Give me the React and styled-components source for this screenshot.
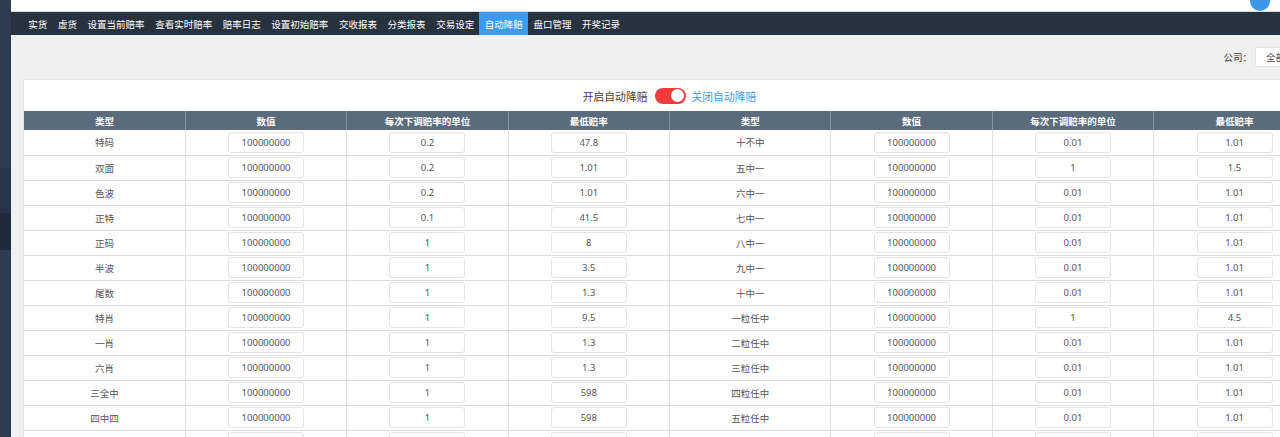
import React from "react";
import styled, { createGlobalStyle } from "styled-components";

const GlobalStyle = createGlobalStyle`
  html, body {
    margin: 0;
    padding: 0;
    overflow: hidden;
    background: #f0f0f0;
    font-family: "Noto Sans", "Noto Sans CJK SC", sans-serif;
  }
  * { box-sizing: border-box; }
`;

const Page = styled.div`
  display: flex;
  height: 437px;
  overflow: hidden;
`;

const Sidebar = styled.div`
  width: 11px;
  flex-shrink: 0;
  background: #2d3c51;
  display: flex;
  flex-direction: column;
`;

const SideBand = styled.div`
  height: ${(p) => p.h}px;
  flex-shrink: 0;
  background: ${(p) => p.bg};
`;

const Main = styled.div`
  width: 1317px;
  flex-shrink: 0;
  display: flex;
  flex-direction: column;
`;

const TopBar = styled.div`
  height: 12px;
  flex-shrink: 0;
  background: #fff;
  border-bottom: 1px solid #d6dbe0;
  display: flex;
  justify-content: flex-end;
  padding-right: 58px;
  overflow: hidden;
`;

const Avatar = styled.div`
  width: 20px;
  height: 20px;
  border-radius: 50%;
  background: #3d95e8;
  margin-top: -9px;
`;

const Nav = styled.div`
  height: 23px;
  flex-shrink: 0;
  background: #27323f;
  display: flex;
  padding-left: 12px;
`;

const NavItem = styled.div`
  padding: 0 5.3px;
  display: flex;
  align-items: center;
  font-size: 9.5px;
  color: #fff;
  background: ${(p) => (p.active ? "#3a9cf0" : "transparent")};
  white-space: nowrap;
`;

const Content = styled.div`
  padding: 12px;
  display: flex;
  flex-direction: column;
  gap: 12px;
  flex-shrink: 0;
`;

const FilterRow = styled.div`
  display: flex;
  justify-content: flex-end;
  align-items: center;
  height: 20px;
  gap: 3px;
`;

const Label = styled.span`
  font-size: 9.5px;
  color: #333;
`;

const Select = styled.div`
  width: 61px;
  height: 20px;
  background: #fff;
  border: 1px solid #e4e4e4;
  border-radius: 2px;
  font-size: 9.5px;
  color: #555;
  display: flex;
  align-items: center;
  padding-left: 10px;
`;

const Panel = styled.div`
  background: #fff;
  border: 1px solid #e6e6e6;
  border-bottom: none;
`;

const SwitchRow = styled.div`
  height: 31px;
  display: flex;
  justify-content: center;
  align-items: center;
  gap: 7px;
  font-size: 10.8px;
`;

const SwitchText = styled.span`
  color: ${(p) => p.color};
`;

const Switch = styled.div`
  width: 31px;
  height: 16px;
  border-radius: 8px;
  background: #ef3b3b;
  display: flex;
  justify-content: flex-end;
  align-items: center;
  padding-right: 1.5px;
  margin-right: -1px;
`;

const Knob = styled.div`
  width: 13px;
  height: 13px;
  border-radius: 50%;
  background: #fff;
`;

const Table = styled.table`
  width: 100%;
  border-collapse: collapse;
  table-layout: fixed;
`;

const Th = styled.th`
  height: 19px;
  padding: 0;
  background: #5a6c7c;
  color: #fff;
  font-size: 9.5px;
  font-weight: 700;
  border-right: 1px solid #8795a2;
  &:last-child { border-right: none; }
`;

const Td = styled.td`
  height: 25px;
  padding: 0;
  text-align: center;
  font-size: 9.5px;
  color: #555;
  border-bottom: 1px solid #dcdcdc;
  border-right: 1px solid #e2e2e2;
  &:last-child { border-right: none; }
`;

const Input = styled.div`
  width: 76px;
  height: 21px;
  margin: 0 auto;
  border: 1px solid #e4e4e4;
  border-radius: 3px;
  display: flex;
  align-items: center;
  justify-content: center;
  font-size: 9.5px;
  color: #555;
`;

const navItems = [
  "实货", "虚货", "设置当前赔率", "查看实时赔率", "赔率日志", "设置初始赔率",
  "交收报表", "分类报表", "交易设定", "自动降赔", "盘口管理", "开奖记录",
];

const headers = ["类型", "数值", "每次下调赔率的单位", "最低赔率"];

const rows = [
  [["特码", "0.2", "47.8"], ["十不中", "0.01", "1.01"]],
  [["双面", "0.2", "1.01"], ["五中一", "1", "1.5"]],
  [["色波", "0.2", "1.01"], ["六中一", "0.01", "1.01"]],
  [["正特", "0.1", "41.5"], ["七中一", "0.01", "1.01"]],
  [["正码", "1", "8"], ["八中一", "0.01", "1.01"]],
  [["半波", "1", "3.5"], ["九中一", "0.01", "1.01"]],
  [["尾数", "1", "1.3"], ["十中一", "0.01", "1.01"]],
  [["特肖", "1", "9.5"], ["一粒任中", "1", "4.5"]],
  [["一肖", "1", "1.3"], ["二粒任中", "0.01", "1.01"]],
  [["六肖", "1", "1.3"], ["三粒任中", "0.01", "1.01"]],
  [["三全中", "1", "598"], ["四粒任中", "0.01", "1.01"]],
  [["四中四", "1", "598"], ["五粒任中", "0.01", "1.01"]],
  [["三中二", "1", "100"], ["六粒任中", "0.01", "1.01"]],
];

const Half = ({ item }) => (
  <>
    <Td>{item[0]}</Td>
    <Td><Input>100000000</Input></Td>
    <Td><Input>{item[1]}</Input></Td>
    <Td><Input>{item[2]}</Input></Td>
  </>
);

const App = () => (
  <>
    <GlobalStyle />
    <Page>
      <Sidebar>
        <SideBand h={168} bg="#2d3c51" />
        <SideBand h={45} bg="#27344a" />
        <SideBand h={37} bg="#1f2a3a" />
      </Sidebar>
      <Main>
        <TopBar><Avatar /></TopBar>
        <Nav>
          {navItems.map((n) => (
            <NavItem key={n} active={n === "自动降赔"}>{n}</NavItem>
          ))}
        </Nav>
        <Content>
          <FilterRow>
            <Label>公司：</Label>
            <Select>全部</Select>
          </FilterRow>
          <Panel>
            <SwitchRow>
              <SwitchText color="#444">开启自动降赔</SwitchText>
              <Switch><Knob /></Switch>
              <SwitchText color="#4a9be3">关闭自动降赔</SwitchText>
            </SwitchRow>
            <Table>
              <thead>
                <tr>
                  {[...headers, ...headers].map((h, i) => <Th key={i}>{h}</Th>)}
                </tr>
              </thead>
              <tbody>
                {rows.map((r, i) => (
                  <tr key={i}>
                    <Half item={r[0]} />
                    <Half item={r[1]} />
                  </tr>
                ))}
              </tbody>
            </Table>
          </Panel>
        </Content>
      </Main>
    </Page>
  </>
);

export default App;
